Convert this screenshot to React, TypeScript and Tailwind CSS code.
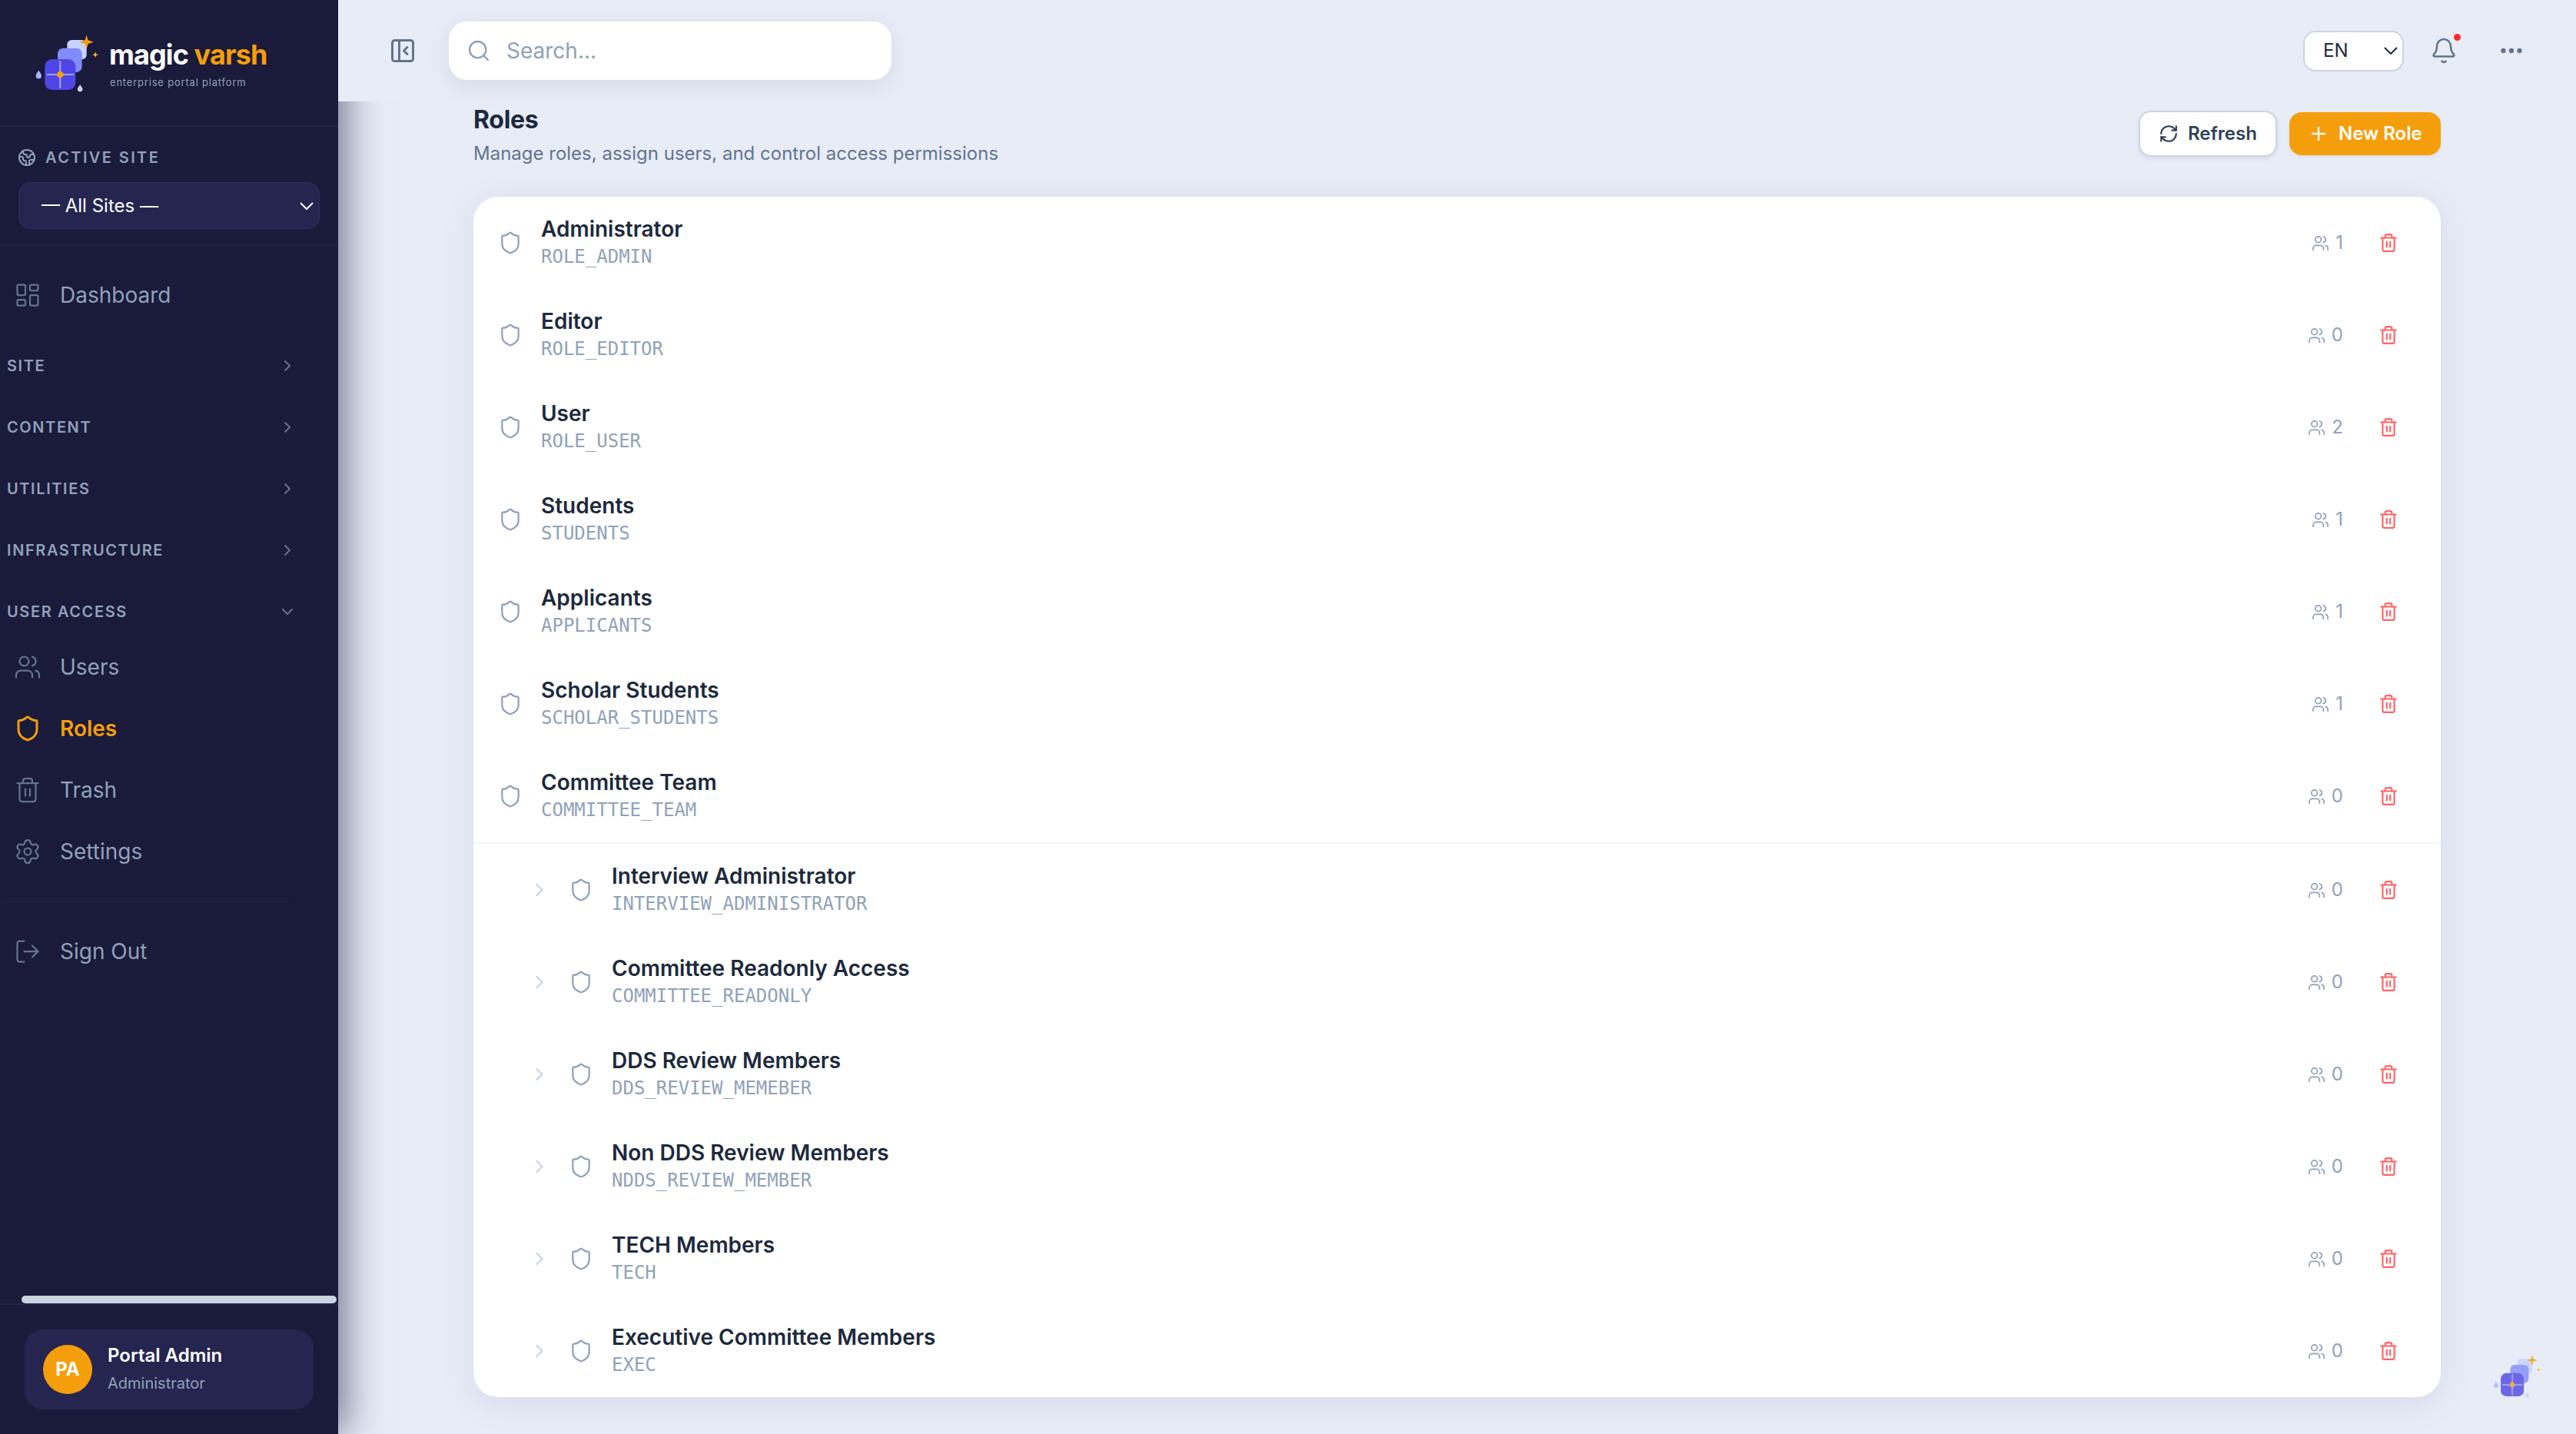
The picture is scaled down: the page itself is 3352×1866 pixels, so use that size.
import {
  Bell,
  ChevronDown,
  ChevronRight,
  Earth,
  Ellipsis,
  LayoutDashboard,
  LogOut,
  PanelLeftClose,
  Plus,
  RefreshCw,
  Search,
  Settings,
  Shield,
  Trash2,
  Users,
} from "lucide-react";

const groups = ["Site", "Content", "Utilities", "Infrastructure", "User Access"];

const accessLinks = [
  { label: "Users", icon: Users },
  { label: "Roles", icon: Shield, active: true },
  { label: "Trash", icon: Trash2 },
  { label: "Settings", icon: Settings },
];

const roles = [
  { name: "Administrator", code: "ROLE_ADMIN", users: 1 },
  { name: "Editor", code: "ROLE_EDITOR", users: 0 },
  { name: "User", code: "ROLE_USER", users: 2 },
  { name: "Students", code: "STUDENTS", users: 1 },
  { name: "Applicants", code: "APPLICANTS", users: 1 },
  { name: "Scholar Students", code: "SCHOLAR_STUDENTS", users: 1 },
  { name: "Committee Team", code: "COMMITTEE_TEAM", users: 0 },
];

const childRoles = [
  { name: "Interview Administrator", code: "INTERVIEW_ADMINISTRATOR", users: 0 },
  { name: "Committee Readonly Access", code: "COMMITTEE_READONLY", users: 0 },
  { name: "DDS Review Members", code: "DDS_REVIEW_MEMEBER", users: 0 },
  { name: "Non DDS Review Members", code: "NDDS_REVIEW_MEMBER", users: 0 },
  { name: "TECH Members", code: "TECH", users: 0 },
  { name: "Executive Committee Members", code: "EXEC", users: 0 },
];

function LogoMark({ className }: { className: string }) {
  return (
    <svg viewBox="45 42 255 231" className={className} xmlns="http://www.w3.org/2000/svg">
      <rect x="172" y="66" width="76" height="76" rx="18" fill="#c7d2fe" />
      <rect x="135" y="98" width="95" height="94" rx="22" fill="#818cf8" />
      <rect x="85" y="141" width="120" height="120" rx="29" fill="#4f46e5" />
      <path d="M145 147v108M92 201h106" stroke="#fff" strokeOpacity="0.5" strokeWidth="6" />
      <circle cx="145" cy="201" r="13" fill="#f59e0b" />
      <path d="M248 47l6 20 22 7-22 7-6 20-6-20-22-7 22-7z" fill="#f59e0b" />
      <path d="M282 112l3 9 9 3-9 3-3 9-3-9-9-3 9-3z" fill="#fbbf24" />
      <path d="M61 185c5 8 11 13 11 21a11 11 0 0 1-22 0c0-8 6-13 11-21z" fill="#a5b4fc" />
      <path d="M222.500 241c4 7 10 11 10 17a10 10 0 0 1-20 0c0-6 6-10 10-17z" fill="#c7d2fe" />
    </svg>
  );
}

function SelectArrow({ className }: { className: string }) {
  return (
    <svg viewBox="0 0 18 10" fill="none" stroke="currentColor" strokeWidth="2" className={className}>
      <path d="M1 1l8 8 8-8" />
    </svg>
  );
}

function NavLink({ icon: Icon, label, active }: { icon: typeof Users; label: string; active?: boolean }) {
  return (
    <a
      className={
        active
          ? "flex h-20 items-center gap-6 pl-[18px] text-[28px] font-semibold text-[#f59e0b]"
          : "flex h-20 items-center gap-6 pl-[18px] text-[28px] text-slate-400"
      }
    >
      <Icon
        className={active ? "size-9" : "size-9 text-slate-500"}
        strokeWidth={active ? 2 : 1.5}
      />
      {label}
    </a>
  );
}

function Sidebar() {
  return (
    <aside className="relative z-10 flex w-[440px] shrink-0 flex-col bg-[#1a1a3a] shadow-[8px_0_48px_rgba(26,26,58,0.6)]">
      <div className="flex h-[165px] items-start border-b-2 border-[#232349] pl-[45px] pt-11">
        <LogoMark className="h-[77px] w-[85px]" />
        <div className="pl-3 pt-[5px]">
          <div className="text-[36px] font-bold leading-[44px] tracking-[-0.9px] text-white">
            magic <span className="text-[#f59e0b]">varsh</span>
          </div>
          <div className="mt-1 pl-px text-[13px] leading-5 tracking-[0.8px] text-slate-400">
            enterprise portal platform
          </div>
        </div>
      </div>

      <div className="h-[155px] border-b-2 border-[#232349] px-6 pt-[25px]">
        <div className="flex h-[30px] items-center gap-3 pl-px text-[20px] font-semibold tracking-[2.4px] text-slate-400">
          <Earth className="-ml-0.5 size-6" strokeWidth={2} />
          ACTIVE SITE
        </div>
        <div className="mt-[17px] flex h-[61px] items-center justify-between rounded-2xl border-2 border-[#2b2b57] bg-[#252550] pl-7 pr-[6px] text-[24px] text-white">
          — All Sites —
          <SelectArrow className="h-[10px] w-[18px]" />
        </div>
      </div>

      <nav className="flex-1 pt-6">
        <NavLink icon={LayoutDashboard} label="Dashboard" />
        <div className="pt-3">
          {groups.map((g, i) => (
            <div
              key={g}
              className="flex h-20 items-center justify-between pl-[9px] pr-[54px] text-[20px] font-semibold uppercase tracking-[1.6px] text-slate-400"
            >
              {g}
              {i === groups.length - 1 ? (
                <ChevronDown className="size-6 text-slate-500" strokeWidth={2} />
              ) : (
                <ChevronRight className="size-6 text-slate-500" strokeWidth={2} />
              )}
            </div>
          ))}
        </div>
        <div className="-mt-2">
          {accessLinks.map((l) => (
            <NavLink key={l.label} {...l} />
          ))}
        </div>
        <div className="ml-0.5 mr-[62px] mt-6 h-0.5 bg-[#20203f]" />
        <div className="pt-6">
          <NavLink icon={LogOut} label="Sign Out" />
        </div>
      </nav>

      <div className="ml-7 mr-0.5 h-2.5 rounded-full bg-slate-300" />
      <div className="h-[170px] border-t-2 border-[#232349] px-8 pt-8">
        <div className="flex h-[104px] items-center gap-5 rounded-3xl bg-[#252550] pl-6">
          <div className="flex size-16 items-center justify-center rounded-full bg-[#f59e0b] text-[24px] font-bold text-white">
            PA
          </div>
          <div>
            <div className="text-[24px] font-semibold leading-9 text-white">Portal Admin</div>
            <div className="text-[20px] leading-9 text-slate-400">Administrator</div>
          </div>
        </div>
      </div>
    </aside>
  );
}

function TopBar() {
  return (
    <header className="relative z-20 flex h-[132px] items-center bg-[#e8ecf7] pl-[66px] pr-[66px]">
      <PanelLeftClose className="size-9 text-slate-500" strokeWidth={2} />
      <div className="ml-[42px] flex h-[76px] w-[576px] -translate-y-0 items-center gap-5 rounded-3xl bg-white pl-[23px] text-[28px] text-slate-400 shadow-[0_8px_32px_rgba(26,26,58,0.08)]">
        <Search className="size-8" strokeWidth={1.8} />
        Search...
      </div>
      <div className="ml-auto flex items-center">
        <div className="flex h-[53px] w-[131px] items-center justify-between rounded-2xl border-2 border-slate-300 bg-white pl-6 pr-[6px] text-[24px] text-slate-800">
          EN
          <SelectArrow className="h-[10px] w-[18px]" />
        </div>
        <div className="relative ml-[34px]">
          <Bell className="size-9 text-slate-500" strokeWidth={1.7} />
          <span className="absolute -top-[4px] right-[-4px] size-[9px] rounded-full bg-red-500" />
        </div>
        <Ellipsis className="ml-[52px] size-9 text-slate-500" strokeWidth={2.2} />
      </div>
    </header>
  );
}

function RoleRow({ role, nested }: { role: (typeof roles)[0]; nested?: boolean }) {
  return (
    <div className={nested ? "flex h-[120px] items-center pl-[72px] pr-[55px]" : "flex h-[120px] items-center pl-8 pr-[55px]"}>
      {nested && <ChevronRight className="mr-6 size-7 text-slate-300" strokeWidth={2} />}
      <Shield className="size-8 text-slate-400" strokeWidth={1.7} />
      <div className="ml-6">
        <div className="text-[28px] font-semibold leading-9 text-slate-800">{role.name}</div>
        <div className="font-['DejaVu_Sans_Mono',monospace] text-[24px] leading-9 text-slate-400">{role.code}</div>
      </div>
      <div className="ml-auto flex items-center gap-2 text-[24px] text-slate-400">
        <Users className="size-[23px]" strokeWidth={1.8} />
        {role.users}
      </div>
      <Trash2 className="ml-[46px] size-[26px] text-red-400" strokeWidth={2} />
    </div>
  );
}

export default function App() {
  return (
    <div className="flex h-[1866px] w-[3352px] overflow-hidden bg-[#e8ecf7] font-['Inter',sans-serif]">
      <Sidebar />
      <div className="flex flex-1 flex-col">
        <TopBar />
        <main className="pl-44 pr-44">
          <div className="flex h-[124px] items-start justify-between">
            <div>
              <h1 className="mt-1 text-[32px] font-bold leading-10 tracking-[-0.3px] text-slate-800">Roles</h1>
              <p className="mt-1.5 text-[24px] leading-9 text-slate-500">
                Manage roles, assign users, and control access permissions
              </p>
            </div>
            <div className="mt-3 flex items-center gap-4">
              <button className="flex h-[60px] w-[180px] items-center gap-3 rounded-2xl border-2 border-slate-300 bg-white pl-6 text-[24px] font-semibold text-slate-700 shadow-[0_2px_6px_rgba(26,26,58,0.08)]">
                <RefreshCw className="size-[26px]" strokeWidth={2} />
                Refresh
              </button>
              <button className="flex h-14 w-[197px] items-center gap-3 rounded-2xl bg-[#f59e0b] pl-6 text-[24px] font-semibold text-white shadow-[0_2px_4px_rgba(26,26,58,0.06)]">
                <Plus className="size-7" strokeWidth={2} />
                New Role
              </button>
            </div>
          </div>

          <section className="rounded-[32px] bg-white shadow-[0_8px_48px_rgba(26,26,58,0.08)]">
            {roles.map((r) => (
              <RoleRow key={r.code} role={r} />
            ))}
            <div className="border-t-2 border-slate-100">
              {childRoles.map((r) => (
                <RoleRow key={r.code} role={r} nested />
              ))}
            </div>
          </section>
        </main>
      </div>
      <LogoMark className="absolute left-[3244px] top-[1762px] z-30 h-[58px] w-16 opacity-80" />
    </div>
  );
}
